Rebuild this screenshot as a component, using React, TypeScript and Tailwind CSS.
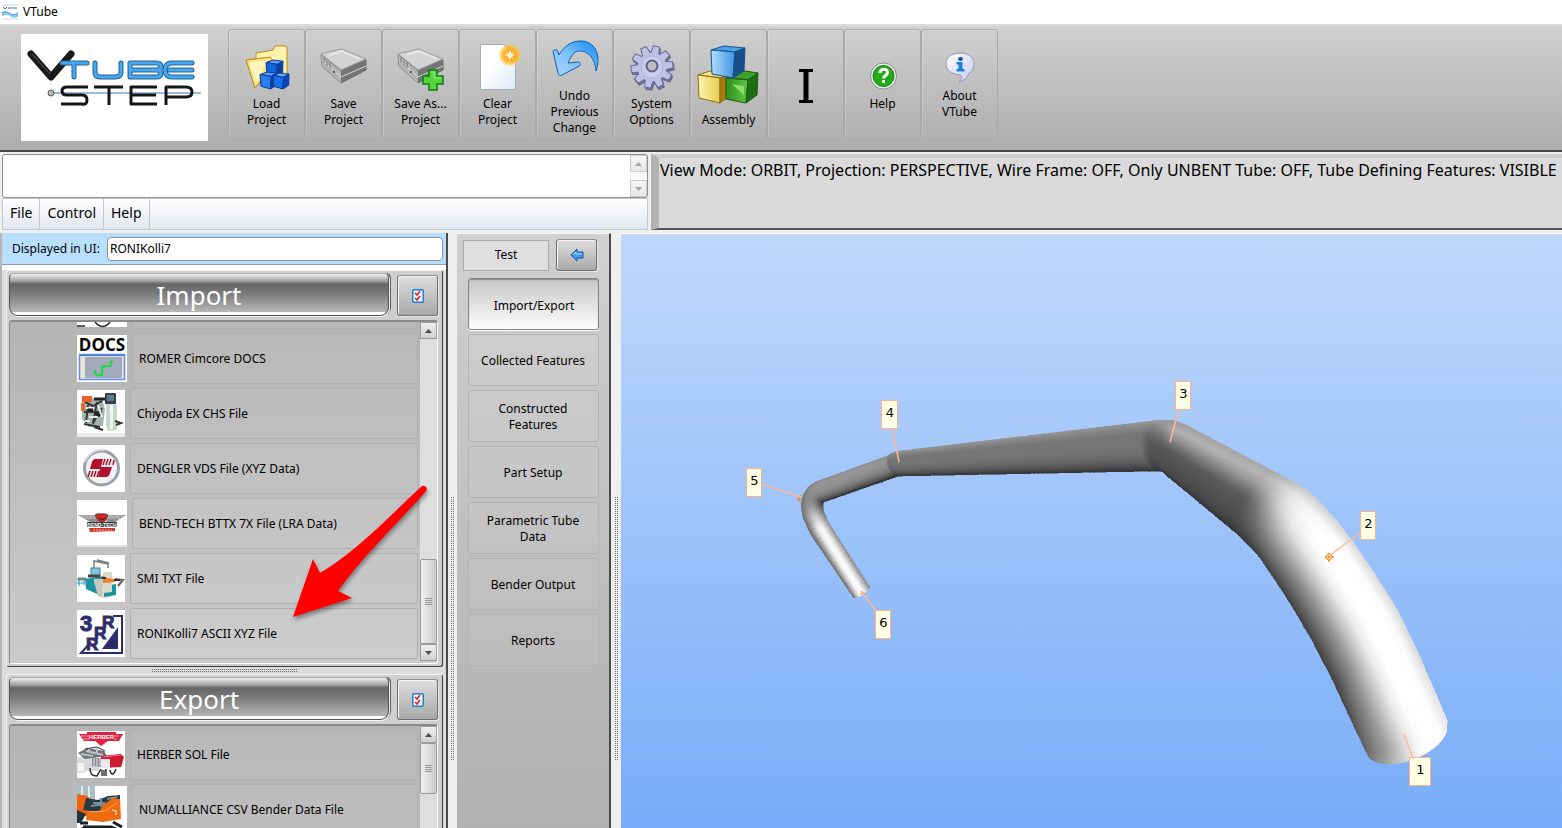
import type { ReactNode } from 'react'

type Pt = [number, number]

/* ---------- toolbar icons ---------- */

function Cube({ x, y, s, top, left, right, edge }: {
  x: number; y: number; s: number; top: string; left: string; right: string; edge: string
}) {
  const p = (list: Pt[]) => list.map(([a, b]) => `${x + a * s},${y + b * s}`).join(' ')
  return (
    <g stroke={edge} strokeWidth="1" strokeLinejoin="round">
      <polygon points={p([[0, 0.15], [0.42, 0], [1, 0.07], [0.66, 0.26]])} fill={top} />
      <polygon points={p([[0, 0.15], [0.66, 0.26], [0.62, 1], [0.06, 0.84]])} fill={left} />
      <polygon points={p([[0.66, 0.26], [1, 0.07], [0.98, 0.76], [0.62, 1]])} fill={right} />
    </g>
  )
}

function LoadIcon() {
  return (
    <svg viewBox="0 0 48 48" className="size-12">
      <path d="M13 40V9l17-3 2-4h11l1 2v30z" fill="#fdf1ae" stroke="#b98a1d" />
      <path d="M3 16l24-3 5 6-20 25z" fill="#fbe072" stroke="#b98a1d" />
      <path d="M6 18l19-2-12 24z" fill="#fff6bd" />
      <Cube x={23} y={16} s={17} top="#5b9cf2" left="#1266dd" right="#0a3fa6" edge="#0a3c9b" />
      <Cube x={17} y={28} s={17} top="#5b9cf2" left="#2b7cec" right="#0a3fa6" edge="#0a3c9b" />
      <Cube x={30} y={29} s={16} top="#6eabf8" left="#1870e8" right="#0a49bb" edge="#0a3c9b" />
    </svg>
  )
}

function DriveShape() {
  return (
    <g strokeLinejoin="round">
      <polygon points="1,11 21,6 46,16 46,26 21,39 2,22" fill="#757575" stroke="#6a6a6a" />
      <polygon points="1,11 21,27 21,39 2,22" fill="#b4b4b4" />
      <polygon points="1,10 21,5 46,15 21,26" fill="#d3d3d3" stroke="#9b9b9b" />
      <path d="M10 11l12-4 18 8" fill="none" stroke="#e6e6e6" strokeWidth="2" />
      <path d="M2 16l19 17 25-11" fill="none" stroke="#d7d7d7" />
      <path d="M4 14v5M7 17v5M10 19v5" stroke="#777" />
      <circle cx="14" cy="28" r="1" fill="#333" />
    </g>
  )
}

function SaveIcon() {
  return <svg viewBox="0 0 48 48" className="size-12"><DriveShape /></svg>
}

function SaveAsIcon() {
  return (
    <svg viewBox="0 0 48 48" className="size-12">
      <DriveShape />
      <path d="M32 26h8v6h6v8h-6v6h-8v-6h-6v-8h6z" fill="#51d33a" stroke="#0c7d0e" strokeWidth="1.500" />
      <path d="M34 28h3v6h7" fill="none" stroke="#a5f08f" />
    </svg>
  )
}

function ClearIcon() {
  return (
    <svg viewBox="0 0 48 48" className="size-12 overflow-visible">
      <defs>
        <linearGradient id="paper" x2="1" y2="1">
          <stop offset=".4" stopColor="#fff" />
          <stop offset="1" stopColor="#dde9f7" />
        </linearGradient>
        <radialGradient id="spark">
          <stop offset="0" stopColor="#ffe678" />
          <stop offset=".4" stopColor="#ffa412" />
          <stop offset=".7" stopColor="#ffb92e" stopOpacity=".8" />
          <stop offset="1" stopColor="#ffd74d" stopOpacity="0" />
        </radialGradient>
      </defs>
      <path d="M6.500 .5h23l12 12v33h-35z" fill="url(#paper)" stroke="#a7adb5" />
      <circle cx="36" cy="11" r="12" fill="url(#spark)" />
      <path d="M36 5l1 5 5 1-5 1-1 6-1-6-5-1 5-1z" fill="#fff" />
      <path d="M32 7l8 8M40 7l-8 8" stroke="#ffe9a8" />
    </svg>
  )
}

function UndoIcon() {
  return (
    <svg viewBox="0 0 48 48" className="size-12">
      <defs>
        <linearGradient id="undo" x1="0" y1="1" x2="1" y2="0">
          <stop offset="0" stopColor="#a9d6ff" />
          <stop offset=".5" stopColor="#7cc0ff" />
          <stop offset="1" stopColor="#0a84ee" />
        </linearGradient>
      </defs>
      <path
        d="M2 15c2-2 4-2 5 1l1 3C14 9 21 5 30 5c13 0 21 13 15 30C44 22 37 15 29 15c-6 0-9 5-12 12l10-1c3 0 3 3 1 4L11 39c-2 1-3 1-4-2z"
        fill="url(#undo)" stroke="#1260b0" strokeLinejoin="round"
      />
    </svg>
  )
}

function GearIcon() {
  const teeth = Array.from({ length: 10 }, (_, i) => i * 36 + 12)
  return (
    <svg viewBox="0 0 48 48" className="size-12">
      <g transform="translate(1 2)" fill="#77779f" stroke="#62628a">
        {teeth.map(a => <path key={a} transform={`rotate(${a} 24 23)`} d="M20 9l1-7h6l1 7z" />)}
        <circle cx="24" cy="23" r="15" />
      </g>
      <g fill="#c0c0e4" stroke="#65658f">
        {teeth.map(a => <path key={a} transform={`rotate(${a} 24 23)`} d="M20 9l1-7h6l1 7z" />)}
        <circle cx="24" cy="23" r="15" />
      </g>
      <g fill="#c0c0e4">
        {teeth.map(a => <path key={a} transform={`rotate(${a} 24 23)`} d="M20.500 11l1-8h5l1 8z" />)}
      </g>
      <circle cx="24" cy="23" r="11" fill="#cbcbea" stroke="#b4b4da" />
      <circle cx="24" cy="22" r="5.500" fill="#c0c0c0" stroke="#5f5f8b" strokeWidth="2" />
    </svg>
  )
}

function AssemblyIcon() {
  return (
    <svg viewBox="0 0 64 64" className="size-16">
      <defs>
        <linearGradient id="cb"><stop stopColor="#b5dcff" /><stop offset="1" stopColor="#3b93e0" /></linearGradient>
        <linearGradient id="cy"><stop stopColor="#fdf5b0" /><stop offset="1" stopColor="#e6cf50" /></linearGradient>
        <linearGradient id="cg"><stop stopColor="#2f8f1e" /><stop offset="1" stopColor="#66c545" /></linearGradient>
      </defs>
      <g strokeLinejoin="round">
        <g stroke="#8a6c16">
          <path d="M1 31l12-4 18 4-4 3z" fill="#f4e48a" />
          <path d="M1 31l22 3v25L2 54z" fill="url(#cy)" />
          <path d="M23 34l7-3v23l-7 5z" fill="#a8790f" />
        </g>
        <g stroke="#1b5c12">
          <path d="M29 33l19-6 13 2-10 7z" fill="#42a02e" />
          <path d="M29 34l22 2-2 23-20-4z" fill="url(#cg)" />
          <path d="M51 36l10-7-1 22-11 8z" fill="#1c6d13" />
        </g>
        <g stroke="#14508a">
          <path d="M14 6l13-4 21 2-10 4z" fill="#4c9fe4" />
          <path d="M14 6l24 2-2 26-21-4z" fill="url(#cb)" />
          <path d="M38 8l10-4-1 23-11 7z" fill="#174f88" />
        </g>
      </g>
      <path d="M35 40l12 2v9z" fill="#8ddc70" />
    </svg>
  )
}

function CursorIcon() {
  return (
    <svg viewBox="0 0 14 36" className="h-9 w-3.5">
      <path d="M0 1h14v3H9.500v28H14v3H0v-3h4.500V4H0z" fill="#000" />
    </svg>
  )
}

function HelpIcon() {
  return (
    <svg viewBox="0 0 32 32" className="size-8">
      <circle cx="16.500" cy="16" r="13" fill="#f0f0f0" stroke="#8b8b8b" />
      <circle cx="16.500" cy="16" r="10.500" fill="#22ac15" stroke="#138010" />
      <path d="M13 13c0-5 7.500-5 7.500-.5 0 3-4 3-4 6" fill="none" stroke="#fff" strokeWidth="3" />
      <rect x="15" y="20" width="3" height="3" fill="#fff" />
    </svg>
  )
}

function AboutIcon() {
  return (
    <svg viewBox="0 0 32 32" className="size-8">
      <defs>
        <linearGradient id="bub" x2="1" y2="1"><stop stopColor="#fff" /><stop offset="1" stopColor="#c9c9ee" /></linearGradient>
      </defs>
      <path d="M16 1C7 1 2 6 2 12s5 10 14 11c2 0 2 4-1 7 8-2 9-7 10-9 4-2 5-5 5-9C30 5 24 1 16 1z" fill="url(#bub)" stroke="#9292bb" />
      <ellipse cx="16.500" cy="7" rx="2.500" ry="2" fill="#1352b4" />
      <path d="M12.500 10h6v7h2v2.500h-8V17h2v-4.500h-2z" fill="#1c7fe0" />
    </svg>
  )
}

/* ---------- list thumbnails ---------- */

function RomerThumb() {
  return (
    <>
      <text x="25" y="16" textAnchor="middle" fontSize="17" fontWeight="700" className="font-['Open_Sans']">DOCS</text>
      <rect x="2.500" y="19.500" width="45" height="25" fill="#e7e4da" stroke="#5f8fe6" strokeWidth="1.500" />
      <rect x="3" y="20" width="44" height="1" fill="#3d70d8" />
      <rect x="8" y="22" width="37" height="21" fill="#a3aabb" />
      <path d="M18 35v3q1 3 7 2V32q1-1 8-1l2-6" fill="none" stroke="#0fe03d" strokeWidth="2" />
    </>
  )
}

function ChiyodaThumb() {
  return (
    <>
      <rect y="43" width="48" height="4" fill="#ececec" />
      <path d="M5 8l20 1 3 10-2 17-14 1-7-8z" fill="#a9b3ae" />
      <path d="M8 12l8 4 9-5M7 22h18M11 15l-2 18M20 12l-4 22M25 18l-9 15M7 34l16 3" stroke="#33383a" strokeWidth="2" fill="none" />
      <path d="M9 18h8M12 27h9M8 31h5M21 15l4 12" stroke="#e6ece8" strokeWidth="2" />
      <rect x="5" y="6" width="10" height="6" fill="#e8602a" />
      <rect x="4" y="13" width="4" height="8" fill="#ea6a2c" />
      <path d="M17 9h11M11 20h5M18 23l5 3" stroke="#1e2020" strokeWidth="3" />
      <path d="M29 14h11v26l-9 1-2-5z" fill="#c8d6ce" />
      <path d="M33 14h3v25h-3z" fill="#eff5f0" />
      <rect x="28" y="3" width="11" height="11" rx="1" fill="#3a3f42" />
      <rect x="30" y="5" width="7" height="6" fill="#567e91" />
      <path d="M38 31l6 2-5 2M17 37l9 3" stroke="#333" strokeWidth="2" fill="none" />
    </>
  )
}

function DenglerThumb() {
  return (
    <>
      <circle cx="24.500" cy="23" r="17" fill="#f4f2f5" stroke="#9aa1a6" strokeWidth="3" />
      <path d="M8 17a18 18 0 0 1 20-12" fill="none" stroke="#d7dbde" strokeWidth="2" />
      <path d="M18 14h8l-2 8h11l-2 6q-1 4-4 4h-8l2-8H13l2-7q1-3 3-3z" fill="#b0112e" />
      <path d="M28 14l-2 6M31 14l-2 6M34 14l-2 6M37 15l-1 5M13 26l-2 6M16 26l-2 6M19 26l-2 6M22 26l-2 6" stroke="#b0112e" strokeWidth="1.500" />
    </>
  )
}

function BendTechThumb() {
  return (
    <>
      <rect y="45" width="50" height="2" fill="#e3e3e3" />
      <path d="M1 15h18l3 7h7l3-7h17L38 22H13z" fill="#8c8c8c" />
      <path d="M4 16h15M7 18h14M31 16h15M30 18h13" stroke="#c9c9c9" />
      <path d="M18 15q2-2 6-1 4-1 7 1-1 6-6 8-5-2-7-8z" fill="#d9231f" stroke="#4a4a4a" />
      <path d="M22 18l3 2 3-2" stroke="#222" fill="none" />
      <rect x="10" y="22" width="30" height="5" fill="#3e3e3e" />
      <text x="25" y="27" textAnchor="middle" fontSize="5" fontWeight="700" fill="#f4f4f4" className="font-['Liberation_Sans']">BEND-TECH</text>
      <path d="M12 28h26v3l-25 1z" fill="#d8312a" />
      <path d="M16 30h19" stroke="#f3b5b0" strokeDasharray="2 1" />
    </>
  )
}

function SmiThumb() {
  return (
    <>
      <path d="M17 13V6l14 3v4M20 5l12 3" stroke="#7c7f80" fill="none" strokeWidth="1.500" />
      <path d="M8 24l19-3v21L9 34z" fill="#1c93a1" />
      <path d="M17 24h10v19l-6-2-4-14z" fill="#c5c8bb" />
      <path d="M26 18l8-1v25l-9 1z" fill="#dcdccd" />
      <path d="M27 31l12-2v11l-12 2z" fill="#1a93a1" />
      <path d="M27 17h8v20l-8 1z" fill="#d8d9cb" />
      <rect x="14" y="13" width="9" height="8" fill="#7fc5e3" stroke="#477f97" />
      <path d="M1 23h8v2H1zM2 25v6M7 25v5M0 28h8" stroke="#249ba6" fill="#d57632" />
      <path d="M11 21h12" stroke="#444" strokeWidth="3" />
      <path d="M26 20l3 3 9 1v3l-12 1z" fill="#ee8126" />
      <path d="M38 24l8 1-5 6" stroke="#6b5c5c" strokeWidth="2" fill="none" />
      <path d="M25 23h4M37 25h6" stroke="#303638" strokeWidth="2" />
    </>
  )
}

function RoniThumb() {
  return (
    <g fill="#2d2c6c" className="font-['Liberation_Sans']">
      <path d="M36 6h9v37H4L14 32" fill="none" stroke="#2d2c6c" strokeWidth="2" />
      <path d="M25 39L41 17v22z" />
      <g fontWeight="700" stroke="#2d2c6c">
        <text x="3" y="21" fontSize="22">3</text>
        <text x="25" y="18" fontSize="17">R</text>
        <text x="17" y="29" fontSize="17">R</text>
        <text x="9" y="40" fontSize="17">R</text>
      </g>
    </g>
  )
}

function HerberThumb() {
  return (
    <>
      <path d="M2 3h8V1h29v2h7l-4 7H31l-7 5-6-5H7z" fill="#e0213f" />
      <path d="M4 5h38M6 8h34" stroke="#f6a6b0" />
      <rect x="12" y="3" width="25" height="6" fill="#e0213f" />
      <text x="24.500" y="8" textAnchor="middle" fontSize="6" fontWeight="700" fill="#fff" className="font-['Liberation_Sans']">HERBER</text>
      <path d="M0 26h16l6 4v10H2z" fill="#d9dade" />
      <path d="M1 22l9-5 17 3 3 5-22 3z" fill="#6d7075" />
      <path d="M9 20l17 4M12 17v5M20 17v5M4 23l12 2" stroke="#c0c3c7" strokeWidth="2" />
      <path d="M8 18l12-2 8 4" stroke="#303236" fill="none" />
      <path d="M15 27h10v9l-10-1z" fill="#878a90" />
      <path d="M17 27v8M20 27v8M23 27v8" stroke="#e2e3e6" />
      <path d="M24 25l20-2 3 3-3 10-19 1z" fill="#cf1832" />
      <path d="M26 26l18-2" stroke="#f0798a" />
      <rect x="24" y="28" width="9" height="9" fill="#e8e8ea" />
      <path d="M13 37c0 7 3 8 7 8l4-7M29 38v7M33 39c1 6 4 5 6-1" stroke="#26282b" fill="none" strokeWidth="1.500" />
      <rect x="0" y="31" width="8" height="10" fill="#f3f3f4" stroke="#c9c9cd" />
      <rect x="24" y="39" width="5" height="6" fill="#6d7075" />
    </>
  )
}

function NumallianceThumb() {
  return (
    <>
      <rect width="18" height="18" fill="#a9bfc3" />
      <path d="M5 0v14M12 0v13" stroke="#e1e9ea" strokeWidth="2" />
      <path d="M0 8l10 2 8 6-4 14H0z" fill="#f0620c" />
      <path d="M9 12l12 2 10-4 12-1v8L22 26 6 24z" fill="#293b42" />
      <path d="M16 17h12M14 20l14-2M24 12v9M30 13l10-2" stroke="#789096" strokeWidth="2" />
      <path d="M26 19l10-7 7 1 1 20-18 3-17-2 1-9 12 1z" fill="#f06a10" />
      <path d="M12 26l16-1 12-8" stroke="#ffa560" fill="none" />
      <path d="M3 37h8M6 41h28l12 5M0 46l10-6M36 36l9 5" stroke="#1d2123" strokeWidth="3" fill="none" />
      <path d="M0 24l9 4-5 9H0z" fill="#26343a" />
      <path d="M35 24l4 1v4" stroke="#fff" fill="none" />
    </>
  )
}

/* ---------- shared pieces ---------- */

function ToolButton({ icon, lines }: { icon: ReactNode; lines: string[] }) {
  return (
    <button
      aria-label={lines.length ? undefined : 'Text cursor'}
      className="flex w-[77px] flex-none flex-col items-center justify-center gap-1 rounded-[3px] border border-[#a9a9a9] pt-0.5 text-xs leading-4 shadow-[inset_1px_1px_0_#ffffff33]"
    >
      {icon}
      {lines.length > 0 && (
        <span>{lines.map(line => <span key={line} className="block">{line}</span>)}</span>
      )}
    </button>
  )
}

const raised = 'rounded-[3px] border border-[#6f6f6f] border-t-[#8e8e8e] bg-linear-to-b from-[#dedede] to-[#a9a9a9] shadow-[inset_1px_1px_0_#f4f4f4,1px_1px_0_#e8e8e8]'

const dots = 'bg-[conic-gradient(transparent_75%,#6f6f6f_0)] bg-[size:2px_2px]'

function SectionTitle({ title }: { title: string }) {
  return (
    <div className="flex gap-2">
      <h2 className="flex h-[43px] flex-1 items-center justify-center rounded-[5px] rounded-b-[9px] border border-[#555] border-t-[#aaa] bg-[linear-gradient(#f2f2f2,#9b9b9b_18%,#666_24%,#777_45%,#b5b5b5_92%,#fff_94%)] text-[26px] leading-8 text-white shadow-[1px_1px_0_#f4f4f4,2px_0_0_#5a5a5a]">
        {title}
      </h2>
      <button aria-label={`${title} options`} className={`mt-0.5 flex h-[41px] w-[41px] items-center justify-center ${raised}`}>
        <svg viewBox="0 0 12 14" className="h-3.5 w-3">
          <rect x=".75" y=".75" width="10.500" height="12.500" rx="1" fill="#eef4fb" stroke="#1c7fd6" strokeWidth="1.500" />
          <path d="M3 4l2 2 3-4M3 9l2 2 3-4" fill="none" stroke="#d02323" strokeWidth="1.500" />
        </svg>
      </button>
    </div>
  )
}

function FileRow({ label, wide, children }: { label: string; wide?: boolean; children?: ReactNode }) {
  return (
    <li className="flex h-[51px] flex-none items-center gap-[5px]">
      <svg viewBox={wide ? '0 0 50 47' : '0 0 48 47'} className={`h-[47px] flex-none overflow-visible bg-white ${wide ? 'w-[50px]' : 'w-12'}`}>
        {children}
      </svg>
      <button className="h-[51px] flex-1 rounded-[2px] border border-[#b0b0b0] bg-white/5 px-1.5 text-left text-xs">{label}</button>
    </li>
  )
}

function Arrow({ down }: { down?: boolean }) {
  return (
    <button
      aria-label={down ? 'Scroll down' : 'Scroll up'}
      className="flex h-[17px] flex-none items-center justify-center border border-[#9b9b9b] bg-linear-to-b from-[#f0f0f0] to-[#cfcfcf]"
    >
      <svg viewBox="0 0 7 4" className="h-1 w-[7px]">
        <path d={down ? 'M0 0h7L3.500 4z' : 'M0 4h7L3.500 0z'} fill="#4b4b4b" />
      </svg>
    </button>
  )
}

function Thumb({ className }: { className: string }) {
  return (
    <div className={`flex flex-col items-center justify-center gap-px rounded-[2px] border border-[#999] bg-linear-to-r from-[#f0f0f0] to-[#cacaca] ${className}`}>
      {[0, 1, 2, 3].map(i => <span key={i} className="h-px w-[7px] bg-[#999]" />)}
    </div>
  )
}

const panel = 'border border-r-[#3f3f3f] border-b-[#3f3f3f] border-t-[#f4f4f4] border-l-[#f4f4f4]'

function ImportSection() {
  return (
    <section className={`flex flex-none flex-col gap-1 rounded-[3px] bg-[#cfcfcf] p-[2px] pr-1 ${panel}`}>
      <SectionTitle title="Import" />
      <div className="flex h-[344px] rounded-[3px] border border-t-2 border-[#8a8a8a] border-r-white border-b-white bg-linear-to-b from-[#b4b4b4] to-[#cacaca]">
        <ul className="flex flex-1 flex-col justify-end gap-1 overflow-hidden pr-0.5 pb-1 pl-[67px]">
          <FileRow label="" wide>
            <path d="M0 46h8M18 42q8 9 15 0" stroke="#223" fill="none" strokeWidth="1.500" />
          </FileRow>
          <FileRow label="ROMER Cimcore DOCS" wide><RomerThumb /></FileRow>
          <FileRow label="Chiyoda EX CHS File"><ChiyodaThumb /></FileRow>
          <FileRow label="DENGLER VDS File (XYZ Data)"><DenglerThumb /></FileRow>
          <FileRow label="BEND-TECH BTTX 7X File (LRA Data)" wide><BendTechThumb /></FileRow>
          <FileRow label="SMI TXT File"><SmiThumb /></FileRow>
          <FileRow label="RONIKolli7 ASCII XYZ File"><RoniThumb /></FileRow>
        </ul>
        <div className="mb-0.5 flex w-[17px] flex-col bg-[#dedede]">
          <Arrow />
          <div className="flex-1" />
          <Thumb className="h-[85px]" />
          <Arrow down />
        </div>
      </div>
    </section>
  )
}

function ExportSection() {
  return (
    <section className={`flex min-h-0 flex-1 flex-col gap-1 rounded-t-[3px] bg-[#cfcfcf] p-[2px] pr-1 pb-0 ${panel} border-b-0`}>
      <SectionTitle title="Export" />
      <div className="flex min-h-0 flex-1 rounded-t-[3px] border border-t-2 border-b-0 border-[#8a8a8a] border-r-white bg-linear-to-b from-[#b4b4b4] to-[#bababa]">
        <ul className="flex flex-1 flex-col gap-1 overflow-hidden pt-[3px] pr-0.5 pl-[67px]">
          <FileRow label="HERBER SOL File"><HerberThumb /></FileRow>
          <FileRow label="NUMALLIANCE CSV Bender Data File" wide><NumallianceThumb /></FileRow>
        </ul>
        <div className="flex w-[17px] flex-col bg-[#dedede]">
          <Arrow />
          <Thumb className="h-[51px]" />
        </div>
      </div>
    </section>
  )
}

function Splitter({ width }: { width: string }) {
  return (
    <div className={`flex flex-none items-start justify-center bg-[#efefef] pt-[264px] ${width}`}>
      <div className={`h-[264px] w-[3px] ${dots}`} />
    </div>
  )
}

/* ---------- tube model ---------- */

// One cross section: inner edge, outer edge, bow of the rim, grey levels from inner to outer
type Ring = { a: Pt; b: Pt; bow?: Pt; shade: number[] }

const PIPE6 = [135, 180, 222, 250, 255, 236, 195, 145, 105]
const PIPE5 = [40, 85, 112, 128, 138, 146, 148, 150, 140]
const PIPE4 = [50, 82, 102, 112, 117, 117, 118, 132, 150]
const PIPE3 = [50, 72, 80, 84, 90, 118, 150, 178, 160]
const PIPE2 = [65, 108, 150, 196, 236, 255, 255, 252, 218]

const RINGS: Ring[] = [
  { a: [870, 587], b: [853, 597], bow: [0, 3], shade: PIPE6 },
  { a: [829, 523], b: [811, 535], shade: [138, 178, 218, 245, 250, 230, 188, 142, 105] },
  { a: [824, 512], b: [803, 518], shade: [118, 142, 168, 190, 198, 185, 162, 136, 108] },
  { a: [823, 506], b: [801, 506], shade: [80, 100, 122, 142, 152, 150, 143, 130, 112] },
  { a: [823, 503], b: [803, 495], shade: [55, 72, 100, 120, 132, 138, 138, 132, 118] },
  { a: [824, 502], b: [808, 487], shade: [45, 75, 104, 122, 134, 142, 144, 142, 128] },
  { a: [827, 501], b: [815, 482], shade: PIPE5 },
  { a: [896, 477], b: [887, 456], bow: [-4, 0], shade: PIPE5 },
  { a: [899, 476], b: [892, 453], bow: [-7, 0], shade: [42, 78, 95, 103, 108, 112, 118, 132, 145] },
  { a: [903, 476], b: [899, 451], bow: [-6, 0], shade: PIPE4 },
  { a: [1158, 471], b: [1152, 421], bow: [-14, 0], shade: PIPE4 },
  { a: [1162, 471], b: [1161, 420], bow: [-13, 0], shade: [50, 66, 76, 82, 86, 92, 105, 130, 155] },
  { a: [1163, 472], b: [1172, 420], bow: [-9, 0], shade: [52, 70, 80, 84, 88, 100, 125, 150, 155] },
  { a: [1166, 475], b: [1184, 424], bow: [-8, -1], shade: PIPE3 },
  { a: [1236, 533], b: [1275, 472], bow: [-9, -5], shade: [52, 70, 80, 84, 92, 122, 158, 180, 170] },
  { a: [1248, 545], b: [1288, 479], bow: [-9, -6], shade: [55, 80, 96, 110, 126, 152, 180, 196, 180] },
  { a: [1255, 552], b: [1298, 484], bow: [-9, -6], shade: [58, 88, 112, 134, 158, 186, 207, 216, 190] },
  { a: [1261, 559], b: [1307, 490], bow: [-8, -5], shade: [60, 95, 126, 156, 187, 214, 230, 232, 200] },
  { a: [1267, 568], b: [1320, 502], bow: [-6, -4], shade: [62, 102, 138, 175, 212, 238, 248, 244, 205] },
  { a: [1273, 577], b: [1337, 521], bow: [-3, -2], shade: [64, 106, 146, 188, 228, 250, 255, 250, 212] },
  { a: [1283, 592], b: [1353, 542], shade: PIPE2 },
  { a: [1293, 608], b: [1373, 571], shade: PIPE2 },
  { a: [1313, 642], b: [1397, 609], shade: PIPE2 },
  { a: [1333, 681], b: [1417, 650], shade: PIPE2 },
  { a: [1350, 718], b: [1433, 687], bow: [1, 4], shade: [78, 118, 154, 196, 234, 254, 255, 252, 224] },
  { a: [1365, 750], b: [1447, 720], bow: [2, 10], shade: [98, 130, 159, 194, 228, 250, 255, 254, 232] },
  { a: [1366, 752], b: [1447, 724], bow: [5, 22], shade: [115, 145, 170, 200, 230, 250, 255, 255, 240] },
]

const mix = (p: number, q: number, t: number) => p + (q - p) * t

const dist = (p: Pt, q: Pt) => Math.hypot(q[0] - p[0], q[1] - p[1])

function ringPoint(r: Ring, u: number): Pt {
  const bow = r.bow ?? [0, 0]
  const arc = Math.sqrt(Math.max(0, 1 - (2 * u - 1) ** 2))
  return [mix(r.a[0], r.b[0], u) + bow[0] * arc, mix(r.a[1], r.b[1], u) + bow[1] * arc]
}

function ringShade(r: Ring, u: number) {
  const pos = u * 8
  const i = Math.min(7, Math.floor(pos))
  return mix(r.shade[i], r.shade[i + 1], pos - i)
}

function buildFacets() {
  const facets: { points: string; fill: string }[] = []
  for (let i = 0; i < RINGS.length - 1; i++) {
    const r = RINGS[i]
    const s = RINGS[i + 1]
    const steps = Math.max(3, Math.round(Math.max(dist(r.a, s.a), dist(r.b, s.b)) / 4))
    const cols = Math.max(12, Math.round(dist(s.a, s.b) / 2))
    const at = (v: number, u: number): Pt => {
      const p = ringPoint(r, u)
      const q = ringPoint(s, u)
      return [mix(p[0], q[0], v), mix(p[1], q[1], v)]
    }
    for (let k = 0; k < steps; k++) {
      const v0 = k / steps
      const v1 = (k + 1) / steps
      for (let c = 0; c < cols; c++) {
        const u0 = c / cols
        const u1 = (c + 1) / cols
        const um = (u0 + u1) / 2
        const g = Math.round(mix(ringShade(r, um), ringShade(s, um), (v0 + v1) / 2))
        const corners = [at(v0, u0), at(v0, u1), at(v1, u1), at(v1, u0)]
        facets.push({
          points: corners.map(([x, y]) => `${x.toFixed(1)},${y.toFixed(1)}`).join(' '),
          fill: `rgb(${g},${g},${g})`,
        })
      }
    }
  }
  return facets
}

const FACETS = buildFacets()

const TAGS = [
  { n: 1, x: 1410, y: 758, w: 21, from: [1413, 758], to: [1404, 734] },
  { n: 2, x: 1361, y: 512, w: 15, from: [1361, 532], to: [1329, 556] },
  { n: 3, x: 1176, y: 382, w: 15, from: [1179, 409], to: [1170, 442] },
  { n: 4, x: 882, y: 401, w: 16, from: [892, 428], to: [899, 462] },
  { n: 5, x: 747, y: 469, w: 15, from: [761, 484], to: [801, 497] },
  { n: 6, x: 876, y: 611, w: 15, from: [876, 611], to: [861, 591] },
]

function Viewport() {
  return (
    <main className="min-w-0 flex-1 overflow-hidden border-t border-white bg-linear-to-b from-[#bfd8fb] to-[#79acf7]">
      <svg viewBox="621 234 941 594" preserveAspectRatio="xMidYMid slice" className="h-full w-full" role="img" aria-label="Bent tube model">
        <g shapeRendering="crispEdges" strokeWidth=".5">
          {FACETS.map((f, i) => <polygon key={i} points={f.points} fill={f.fill} stroke={f.fill} />)}
        </g>
        <g stroke="#ff7a00" fill="none">
          <path d="M1329 553l4 4-4 4-4-4zM1325 557h9M1329 553v9" />
          <path d="M801 495l-3 4 3 4M797 499h5" />
          <path d="M860 594h5l-3-2" />
        </g>
        {TAGS.map(t => (
          <g key={t.n}>
            <line x1={t.from[0]} y1={t.from[1]} x2={t.to[0]} y2={t.to[1]} stroke="#ffb699" strokeWidth="1.500" />
            <rect x={t.x - 0.5} y={t.y - 0.5} width={t.w} height="28" fill="#ffffe6" stroke="#ffb08f" />
            <text x={t.x + t.w / 2} y={t.y + 16} textAnchor="middle" fontSize="13" className="font-['DejaVu_Sans',sans-serif]">{t.n}</text>
          </g>
        ))}
      </svg>
    </main>
  )
}

/* ---------- page ---------- */

const NAV: string[][] = [
  ['Import/Export'],
  ['Collected Features'],
  ['Constructed', 'Features'],
  ['Part Setup'],
  ['Parametric Tube', 'Data'],
  ['Bender Output'],
  ['Reports'],
]

function LogoTube() {
  return (
    <>
      <path d="M41 29h25M53 30v13" />
      <path d="M74 29v9q0 5 5 5h15q6 0 6-5v-9" />
      <path d="M109 29h26q5 0 5 3.500t-5 3.500h-25M109 29v14h26q5 0 5-3.500t-5-3.500" />
      <path d="M171 29h-20q-7 0-7 7t7 7h20M148 36h23" />
    </>
  )
}

function Logo() {
  return (
    <svg viewBox="0 0 187 107" className="h-[107px] w-[187px] bg-white" role="img" aria-label="VTube Step">
      <path d="M30 59h150" stroke="#3c74c0" />
      <circle cx="30" cy="59" r="3" fill="#b8b8b8" stroke="#5b5b5b" />
      <g fill="none" strokeLinejoin="round">
        <path d="M10 20l20 23L50 20" stroke="#1a1a1a" strokeWidth="7" strokeLinecap="round" />
        <path d="M11 20l18 20" stroke="#595959" />
        <g strokeLinecap="round">
          <g stroke="#2a6190" strokeWidth="5"><LogoTube /></g>
          <g stroke="#45a8f2" strokeWidth="3"><LogoTube /></g>
        </g>
        <g stroke="#161616" strokeWidth="3">
          <path d="M67 53H46q-5 0-5 4t5 4h15q5 0 5 5t-5 4H40" />
          <path d="M73 53h29M88 53v18" />
          <path d="M136 53h-26v17h26M110 61h25" />
          <path d="M145 71V53h20q6 0 6 5t-6 5h-20" />
        </g>
      </g>
    </svg>
  )
}

export default function App() {
  return (
    <div className="relative flex h-screen flex-col overflow-hidden bg-[#efefef] font-['Noto_Sans',sans-serif] text-xs text-black">
      <div className="flex h-6 flex-none items-center gap-[5px] bg-white px-0.5">
        <svg viewBox="0 0 16 16" className="size-4">
          <path d="M0 1h16M0 15h16" stroke="#d5d5d5" />
          <path d="M1 3l2 2 2-2M6 4h9" stroke="#456e8e" fill="none" />
          <path d="M0 8q4-2 8 1t8-1v4q-4 3-8 0t-8 0z" fill="#4aaae9" />
          <path d="M0 10q4-2 8 1t8-1" stroke="#b7e0fa" fill="none" />
        </svg>
        <span>VTube</span>
      </div>

      <header className="flex h-32 flex-none border-t-2 border-b-2 border-t-[#dcdcdc] border-b-[#444] bg-linear-to-b from-[#d0d0d0] to-[#adadad] pt-[3px] pb-[10px] pl-[21px]">
        <div className="mt-[5px] mr-5 flex-none"><Logo /></div>
        <div className="flex">
          <ToolButton icon={<LoadIcon />} lines={['Load', 'Project']} />
          <ToolButton icon={<SaveIcon />} lines={['Save', 'Project']} />
          <ToolButton icon={<SaveAsIcon />} lines={['Save As...', 'Project']} />
          <ToolButton icon={<ClearIcon />} lines={['Clear', 'Project']} />
          <ToolButton icon={<UndoIcon />} lines={['Undo', 'Previous', 'Change']} />
          <ToolButton icon={<GearIcon />} lines={['System', 'Options']} />
          <ToolButton icon={<AssemblyIcon />} lines={['Assembly']} />
          <ToolButton icon={<CursorIcon />} lines={[]} />
          <ToolButton icon={<HelpIcon />} lines={['Help']} />
          <ToolButton icon={<AboutIcon />} lines={['About', 'VTube']} />
        </div>
      </header>

      <div className="flex h-[81px] flex-none gap-[3px] pt-0.5 pb-[3px]">
        <div className="flex w-[648px] flex-none flex-col pl-0.5">
          <div className="flex h-11 flex-none rounded-[3px] border border-[#8f8f8f] bg-white">
            <textarea aria-label="Messages" className="flex-1 resize-none outline-none" />
            <div className="flex w-[17px] flex-col justify-between bg-[#f4f4f4] opacity-50">
              <Arrow />
              <Arrow down />
            </div>
          </div>
          <nav className="flex h-8 border border-[#c4c8cf] bg-linear-to-b from-white to-[#e2e6ee] text-sm">
            {['File', 'Control', 'Help'].map(item => (
              <button key={item} className="border-r border-[#c4c8cf] px-[7px] pb-0.5">{item}</button>
            ))}
          </nav>
        </div>
        <output className="min-w-0 flex-1 overflow-hidden border-b-2 border-l-8 border-t-4 border-t-[#cfcfcf] border-b-[#555] border-l-[#b3b3b3] bg-[#dadada] pt-0.5 pl-px text-base leading-5 whitespace-nowrap">
          View Mode: ORBIT, Projection: PERSPECTIVE, Wire Frame: OFF, Only UNBENT Tube: OFF, Tube Defining Features: VISIBLE
        </output>
      </div>

      <div className="flex min-h-0 flex-1">
        <aside className="flex w-[448px] flex-none flex-col border-r-2 border-l-2 border-r-[#4a4a4a] border-l-[#b5b5b5] bg-[#dcdcdc]">
          <div className="flex h-8 flex-none items-center border-b border-[#8f9eaa] bg-[#b9dfff] pr-[3px] pl-2.5">
            <label htmlFor="shown" className="w-[95px]">Displayed in UI:</label>
            <input id="shown" defaultValue="RONIKolli7" className="h-6 min-w-0 flex-1 rounded-[4px] border border-[#8c9299] bg-white px-0.5" />
          </div>
          <div className="flex min-h-0 flex-1 flex-col border-t-[5px] border-white pr-[3px] pl-1">
            <ImportSection />
            <div className="flex h-[7px] flex-none items-center justify-center">
              <div className={`h-[3px] w-[146px] ${dots}`} />
            </div>
            <ExportSection />
          </div>
        </aside>

        <Splitter width="w-[9px]" />

        <aside className="flex w-[154px] flex-none flex-col gap-[7px] border-r-2 border-r-[#4a4a4a] border-t border-t-[#f7f7f7] bg-linear-to-b from-[#d0d0d0] to-[#b0b0b0] px-1.5 pt-[5px]">
          <div className="flex items-center gap-[7px]">
            <span className="flex h-[31px] w-[86px] items-center justify-center border border-[#aaa] bg-[#dfdfdf]">Test</span>
            <button aria-label="Back" className={`flex h-8 w-[41px] items-center justify-center ${raised}`}>
              <svg viewBox="0 0 14 14" className="size-3.5">
                <path d="M1 7l6-6v3h6v6H7v3z" fill="#3f9af0" stroke="#1456a8" strokeLinejoin="round" />
                <path d="M3 7l3-3v2h6" fill="none" stroke="#a8d5fb" />
              </svg>
            </button>
          </div>
          <nav className="flex w-[131px] flex-col gap-1 self-center">
            {NAV.map((lines, i) => (
              <button
                key={lines[0]}
                className={`h-[52px] rounded-[3px] border leading-4 ${
                  i === 0
                    ? 'border-[#858585] bg-linear-to-b from-[#c6c6c6] to-[#fdfdfd] pt-1 pl-0.5 shadow-[inset_0_1px_1px_#8a8a8a,0_1px_0_#fff]'
                    : 'border-[#b3b3b3] bg-white/5 pt-0.5'
                }`}
              >
                {lines.map(line => <span key={line} className="block">{line}</span>)}
              </button>
            ))}
          </nav>
        </aside>

        <Splitter width="w-[10px]" />
        <Viewport />
      </div>

      <svg viewBox="0 0 140 140" className="pointer-events-none absolute top-[481px] left-[290px] size-[140px] drop-shadow-[1px_3px_2px_#0006]" aria-hidden="true">
        <path d="M3 136L23 78l7 14C70 68 98 36 132 5q4-1 5 4C108 42 72 76 48 110l14 7z" fill="#f00" />
      </svg>
    </div>
  )
}
